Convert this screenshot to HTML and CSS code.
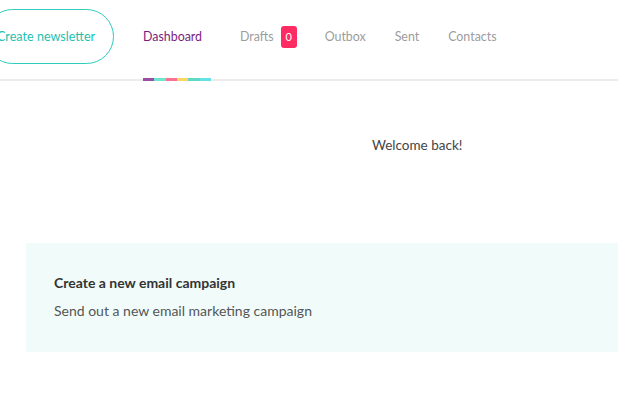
FILE: index.html
```html
<!DOCTYPE html>
<html lang="en">
<head>
  <meta charset="UTF-8" />
  <title>Dashboard</title>
  <link rel="stylesheet" href="styles.css">
</head>
<body>

<header class="topbar">
  <button class="btn-create">Create newsletter</button>
  <nav class="tabs">
    <a class="tab active">Dashboard
      <span class="stripe"><i></i><i></i><i></i><i></i><i></i><i></i></span>
    </a>
    <a class="tab">Drafts <span class="badge">0</span></a>
    <a class="tab">Outbox</a>
    <a class="tab">Sent</a>
    <a class="tab">Contacts</a>
  </nav>
</header>

<main class="main">
  <p class="welcome">Welcome back!</p>

  <div class="card">
    <h3>Create a new email campaign</h3>
    <p>Send out a new email marketing campaign</p>
  </div>
</main>

</body>
</html>
```

FILE: styles.css
```css
body {
  margin: 0;
  font-family: 'Lato', 'Open Sans', sans-serif;
  background: #fff;
  overflow: hidden;
}

.topbar {
  display: flex;
  align-items: center;
  height: 79px;
  border-bottom: 2px solid #ececec;
}

.btn-create {
  box-sizing: border-box;
  margin-left: -15px;
  width: 129px;
  height: 55px;
  border: 1.5px solid #2ccdbd;
  border-radius: 28px;
  background: #fff;
  color: #1fc1b1;
  font-family: 'Lato', sans-serif;
  font-size: 12.6px;
  padding: 0 0 0 11px;
  text-align: left;
  margin-top: -6px;
}

.tabs {
  display: flex;
  align-items: center;
  margin-left: 29px;
  margin-top: -6px;
}

.tab {
  position: relative;
  font-family: 'Lato', sans-serif;
  font-size: 12.4px;
  color: #9c9c9c;
  margin-right: 29px;
  display: flex;
  align-items: center;
}

.tab.active {
  color: #7b1b7e;
  margin-right: 38px;
}

.tab:nth-child(2) { margin-right: 28px; }

.stripe {
  position: absolute;
  left: 0;
  top: 49px;
  display: flex;
  width: 68px;
  height: 3px;
}

.stripe i {
  flex: 1;
}
.stripe i:nth-child(1) { background: #9b4ea6; }
.stripe i:nth-child(2) { background: #6de6cd; }
.stripe i:nth-child(3) { background: #ff7191; }
.stripe i:nth-child(4) { background: #ffd666; }
.stripe i:nth-child(5) { background: #5fd8c4; }
.stripe i:nth-child(6) { background: #62e3ea; }

.badge {
  display: inline-block;
  margin-left: 7px;
  width: 16px;
  height: 22px;
  line-height: 22px;
  border-radius: 3px;
  background: #ff2b63;
  color: #fff;
  font-size: 11px;
  text-align: center;
}

.main {
  padding-top: 56px;
}

.welcome {
  margin: 0 0 0 372px;
  font-size: 13.5px;
  color: #444;
}

.card {
  margin: 90px 0 0 26px;
  width: 700px;
  height: 109px;
  box-sizing: border-box;
  padding: 31px 28px;
  background: #f1fcfa;
}

.card h3 {
  margin: 0;
  font-size: 14px;
  font-weight: bold;
  color: #333;
}

.card p {
  margin: 11px 0 0;
  font-size: 14px;
  color: #555;
}
```
